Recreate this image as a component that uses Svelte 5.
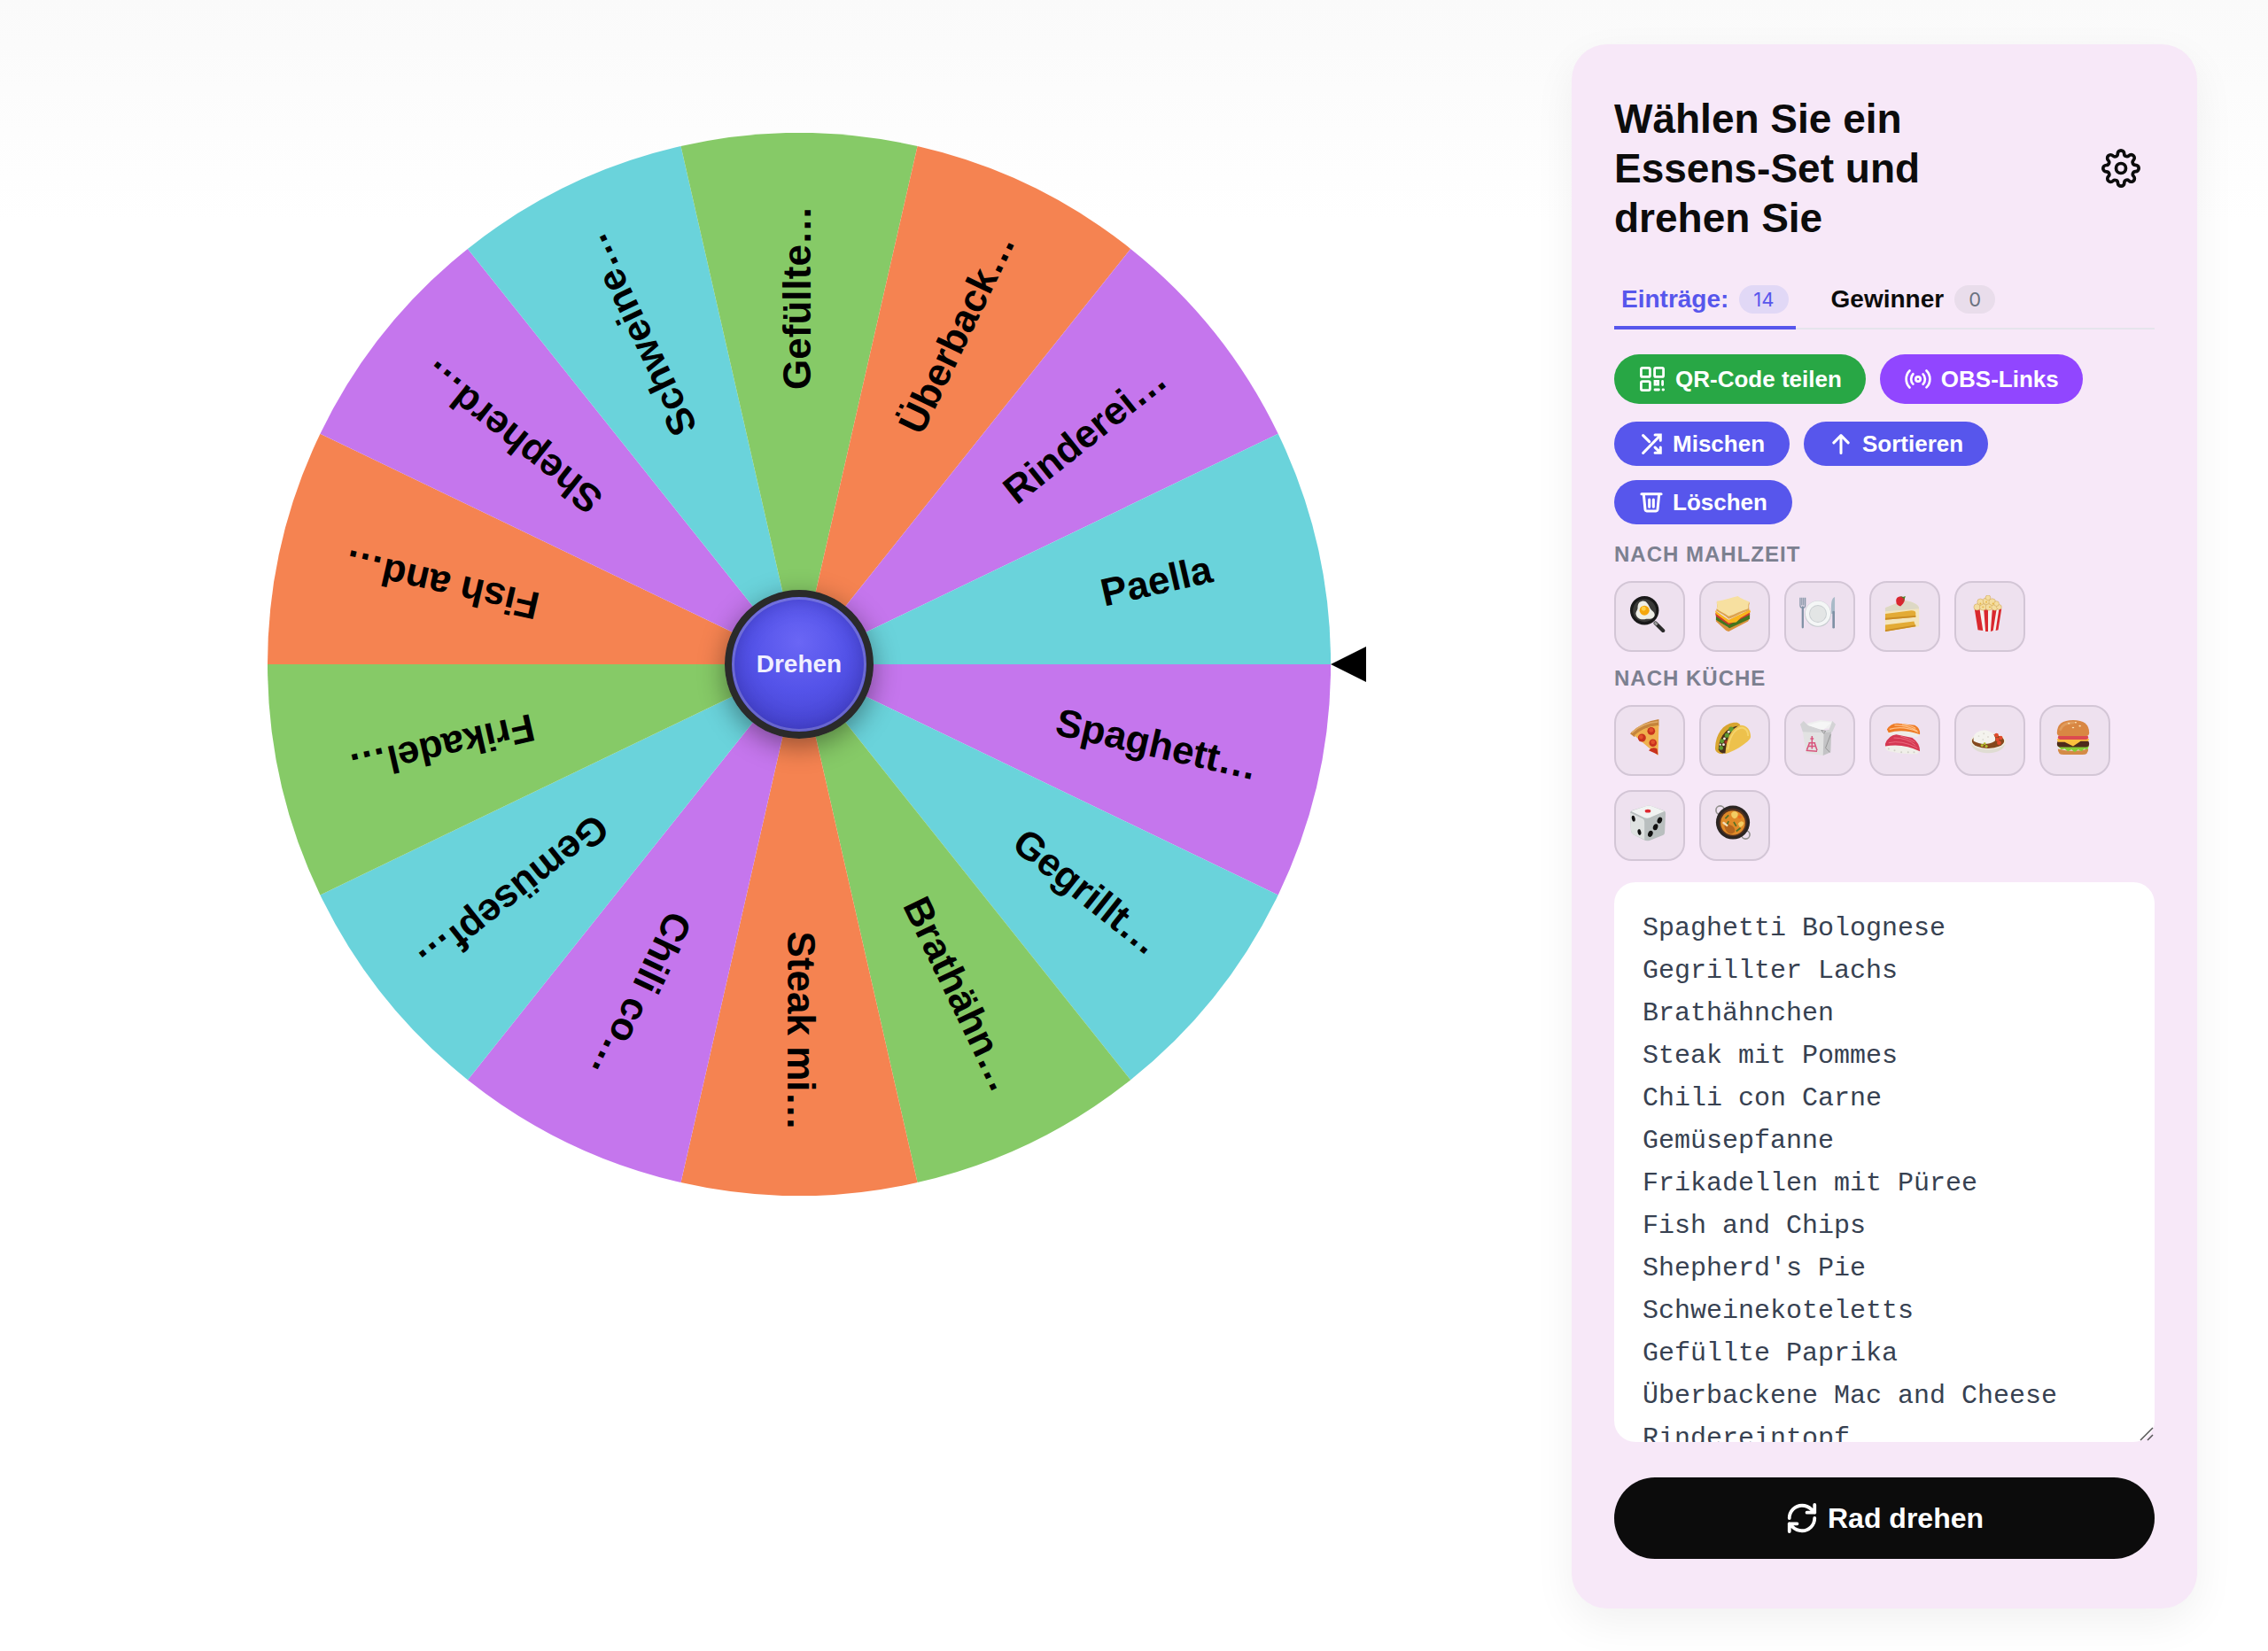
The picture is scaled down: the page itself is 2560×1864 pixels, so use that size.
<script>
  const entries = [
    'Spaghetti Bolognese',
    'Gegrillter Lachs',
    'Brathähnchen',
    'Steak mit Pommes',
    'Chili con Carne',
    'Gemüsepfanne',
    'Frikadellen mit Püree',
    'Fish and Chips',
    "Shepherd's Pie",
    'Schweinekoteletts',
    'Gefüllte Paprika',
    'Überbackene Mac and Cheese',
    'Rindereintopf',
    'Paella'
  ];

  let text = $state(entries.join('\n'));
  let tab = $state('entries');
  let rotation = $state(0);

  let items = $derived(text.split('\n').filter((line) => line.trim()));
  let step = $derived(360 / Math.max(items.length, 1));

  // purple, cyan, green, orange
  const wedgeColors = ['#c576ed', '#6ad3db', '#86ca67', '#f58351'];

  const meals = [
    {
      name: 'Frühstück',
      art: `<path d="M31 33l9 9" stroke="#2c2c2c" stroke-width="4.4" stroke-linecap="round"/><path d="M30 32l3 3" stroke="#999" stroke-width="3"/>
        <circle cx="18" cy="18" r="17" fill="#191919"/><circle cx="18" cy="18" r="13.6" fill="#3a3a38"/>
        <path d="M15 7c5-1 7 3 9 7 1 4 7 6 6 10-2 5-7 4-10 4-6 2-11-1-12-5-1-3 2-5 2-8 0-4 1-7 5-8z" fill="#eeeee6"/>
        <circle cx="18" cy="18" r="5.8" fill="#f5a70c"/><circle cx="17" cy="16" r="2.6" fill="#fdd045"/>`
    },
    {
      name: 'Mittagessen',
      art: `<path d="M2 28l14 10 26-11-2 4-23 12-3-1L2 31z" fill="#d9923c"/><path d="M2 24l15 10 25-12v6L18 39 2 29z" fill="#43751f"/>
        <path d="M1 21l16 10 25-12v4L17 35 2 25z" fill="#c9392e"/><path d="M1 18l16 11 25-12 1 3-12 7-5 5-9 1L2 22z" fill="#f9b51d"/>
        <path d="M3 8C11 7 21 3 28 2c2 3 11 5 14 7-2 4 0 7-1 9-8 2-17 8-24 10C12 23 6 21 2 18c2-3 1-7 1-10z" fill="#dca451"/>
        <path d="M3 7C11 6 20 3 28 1c3 3 10 5 14 7-3 3-1 5-2 8-8 2-16 7-23 9C12 21 6 19 3 16c1-3 0-5 0-9z" fill="#f7e0a0"/>`
    },
    {
      name: 'Abendessen',
      art: `<circle cx="22" cy="22" r="15.5" fill="#c4cace"/><circle cx="22" cy="21.5" r="14.8" fill="#f4f6f6"/><circle cx="22" cy="22" r="10.5" fill="#c9ced1"/><circle cx="22" cy="22" r="9.5" fill="#e3e5e5"/>
        <path d="M1 3v9q0 3 3 3M3 3v9M5 3v9M7 3v9q0 3-3 3" fill="none" stroke="#8292a4" stroke-width="1.3"/><path d="M4 14v24" stroke="#7f91a5" stroke-width="2.4" stroke-linecap="round"/>
        <path d="M42 2c-4 1-5 8-4 20h4z" fill="#a9bac8"/><path d="M40.5 20v18" stroke="#7f91a5" stroke-width="2.8" stroke-linecap="round"/>`
    },
    {
      name: 'Dessert',
      art: `<path d="M1 15L23 6c11 2 18 5 18 10v21L1 43z" fill="#f3e5bd"/><path d="M1 15L23 6c11 2 18 5 18 10L1 19z" fill="#ddd8c5"/>
        <path d="M1 22l31-4q5 0 5 3v5L1 29zM1 35l34-4 2 6-36 6z" fill="#e3ab35"/><path d="M1 27l36-3v2L1 29zM1 41l36-6v2L1 43z" fill="#c98b24"/>
        <path d="M14 8c-1-6 4-7 8-6 4 1 2 7-3 11-3-1-5-2-5-5z" fill="#da2630"/><path d="M18 1l5 3-2 4 3-4 1-3-3 1z" fill="#418429"/>`
    },
    {
      name: 'Snacks',
      art: `<path d="M6 16h32l-4 25q-12 3-24 0z" fill="#f5f0ed"/><path d="M6 16h6l4 26-6-1zM17 17h5v26h-3zM27 17h5l-4 25-3 1zM35 16h3l-4 25-3 1z" fill="#d9282e"/>
        <g fill="#f4dda0" stroke="#cb9d49" stroke-width=".5"><circle cx="9" cy="14" r="3.8"/><circle cx="16" cy="14" r="4"/><circle cx="23" cy="14" r="4"/><circle cx="30" cy="14" r="4"/><circle cx="35" cy="14" r="3"/><circle cx="13" cy="8" r="3.8"/><circle cx="20" cy="7" r="4"/><circle cx="27" cy="8" r="4"/><circle cx="32" cy="10" r="3"/><circle cx="22" cy="3" r="3"/></g>
        <g fill="#e5b33f"><circle cx="13" cy="10" r="1"/><circle cx="20" cy="8" r="1"/><circle cx="28" cy="10" r="1"/><circle cx="24" cy="14" r="1"/><circle cx="16" cy="14" r="1"/></g>`
    }
  ];

  const cuisines = [
    {
      name: 'Italienisch',
      art: `<path d="M1 17Q14 3 35 0v8Q18 8 6 21z" fill="#c5843b"/><path d="M6 19Q17 9 35 7l-1 36z" fill="#efb04d"/><path d="M3 16Q16 4 34 3" fill="none" stroke="#dfaa66" stroke-width="2"/>
        <g fill="#c8321d"><circle cx="26" cy="14" r="4.6"/><circle cx="15" cy="22" r="4.7"/><circle cx="28" cy="28" r="4.5"/><path d="M23 37q4-5 10-2l1 7z"/></g>
        <g fill="#e2512b"><circle cx="26" cy="13" r="2.5"/><circle cx="14" cy="21" r="2.5"/><circle cx="28" cy="27" r="2.5"/></g>`
    },
    {
      name: 'Mexikanisch',
      art: `<path d="M1 34C2 17 10 6 23 4c6-1 8 2 8 5L10 41c-6 0-9-3-9-7z" fill="#d8a52f"/><path d="M5 36C5 22 14 9 28 8L14 40c-4 1-7 0-9-4z" fill="#49301b"/>
        <g fill="#5f9a32"><circle cx="20" cy="12" r="3"/><circle cx="15" cy="19" r="2.7"/><circle cx="9" cy="26" r="2.6"/><circle cx="8" cy="34" r="2.5"/></g>
        <g fill="#f3eddc"><circle cx="17" cy="15" r="1.5"/><circle cx="12" cy="23" r="1.5"/><circle cx="11" cy="30" r="1.5"/><circle cx="7" cy="30" r="1.2"/></g><circle cx="14" cy="27" r="2" fill="#a03222"/>
        <path d="M13 41c1-18 7-31 18-34 8 0 12 6 12 14-1 6-21 18-30 20z" fill="#edc14c"/><path d="M16 36c2-15 8-25 17-26 5 1 7 5 7 10" fill="none" stroke="#f5d46d" stroke-width="2"/>`
    },
    {
      name: 'Chinesisch',
      art: `<path d="M9 5l16-4 15 2-5 8H12z" fill="#efefef"/><path d="M3 8l27 6-2 29-20-3z" fill="#e2e2e2"/><path d="M29 14l9-2-1 27-9 4z" fill="#c3c3c5"/>
        <path d="M1 6l4-4 5 5 18 6 1 3L4 15zM28 14l7-1 4-11 4 4-4 9-10 1z" fill="#d3d3d5"/><path d="M10 7l18 6 10-9-13-1z" fill="#f6f6f6"/><path d="M26 13l5 1-2 3zM37 18l-6 16 5 5" stroke="#888" fill="none" stroke-width=".8"/>
        <path d="M15 20v15M13 23h4M11 28h8M10 32h10M8 37l13 1M12 28l-3 8M18 28l3 9" stroke="#d8557d" stroke-width="1.6" fill="none"/>`
    },
    {
      name: 'Japanisch',
      art: `<path d="M5 14q-2 4 3 6l31 1q4-3 0-7z" fill="#eeede8"/><path d="M3 12Q8 4 16 5l20 2q7 4 6 11Q22 11 5 16z" fill="#ee7b24"/><path d="M6 12q15-5 34 3M12 7q15 0 27 7M21 6q12 2 16 5" fill="none" stroke="#ffc187" stroke-width="1.3"/>
        <path d="M1 30q-1 6 5 8 18 4 32 3 5-2 3-8z" fill="#f0efe9"/><path d="M1 29Q5 19 14 18l19 4q9 6 9 16Q22 28 1 32z" fill="#d53852"/><path d="M5 28q15-4 34 6M11 22q16 0 26 9M19 20q11 3 17 7" fill="none" stroke="#ea6c7f" stroke-width="1"/>
        <path d="M5 35h.1M12 37h.1M20 39h.1M28 39h.1M35 39h.1" stroke="#cfcfc6" stroke-width="2" stroke-linecap="round"/>`
    },
    {
      name: 'Indisch',
      art: `<path d="M1 26q2 14 21 14t21-14z" fill="#dfdcd2"/><ellipse cx="22" cy="26" rx="21" ry="10" fill="#efece2"/><ellipse cx="22" cy="26" rx="19" ry="8.5" fill="#84481d"/>
        <path d="M5 26C3 16 12 13 18 13s15 6 12 13c-8 5-18 4-25 0z" fill="#f4f3ee"/><g fill="#dbd9cf"><circle cx="11" cy="20" r="1"/><circle cx="17" cy="17" r="1"/><circle cx="22" cy="21" r="1"/><circle cx="16" cy="24" r="1"/></g>
        <g fill="#e24a2c"><circle cx="32" cy="19" r="2.5"/><circle cx="37" cy="22" r="2.3"/><circle cx="33" cy="24" r="2.2"/><circle cx="35" cy="28" r="2.5"/></g><g fill="#b2bd30"><circle cx="15" cy="31" r="1.7"/><circle cx="20" cy="32" r="1.7"/><circle cx="18" cy="29" r="1.5"/></g>`
    },
    {
      name: 'Amerikanisch',
      art: `<path d="M4 35q18 5 36 0 0 7-7 7H11q-7 0-7-7z" fill="#d48b46"/><path d="M3 31l38 0-2 5-4-1-3 3-4-2-4 3-4-3-4 2-4-3-4 1z" fill="#86cd36"/><rect x="3" y="25" width="38" height="8" rx="4" fill="#4d2b1b"/>
        <path d="M3 23h38l-1 3-9 0-9 6-10-5H4z" fill="#fbc13d"/><rect x="4" y="19" width="36" height="5" rx="2.5" fill="#dc4950"/><path d="M3 16q0-15 19-15t19 15q0 4-4 4H7q-4 0-4-4z" fill="#d98743"/><path d="M7 12Q10 4 22 4" fill="none" stroke="#e09b5c" stroke-width="3" stroke-linecap="round"/>
        <g fill="#fbe3b5"><ellipse cx="17" cy="5" rx="1.3" ry=".8"/><ellipse cx="25" cy="4" rx="1.3" ry=".8"/><ellipse cx="30" cy="8" rx="1.3" ry=".8"/><ellipse cx="22" cy="10" rx="1.3" ry=".8"/></g>`
    },
    {
      name: 'Zufällig',
      art: `<path d="M1 11q0-3 3-4L20 2q3-1 6 0l14 5q3 1 3 4l-1 22q0 3-3 4l-15 6q-4 1-7-1L5 36q-3-2-3-5z" fill="#b9bfbf"/><path d="M2 8L20 2q3-1 6 0l16 6-18 8q-3 1-6 0z" fill="#f1f3f2"/><path d="M1 10l15 7q2 1 2 4v21L5 36q-3-2-3-5z" fill="#dfe2e1"/>
        <ellipse cx="22" cy="8" rx="3.5" ry="2" fill="#de2930"/><g fill="#111"><ellipse cx="5" cy="17" rx="2" ry="3.6" transform="rotate(-12 5 17)"/><ellipse cx="12" cy="33" rx="2" ry="3.6" transform="rotate(-12 12 33)"/><ellipse cx="36" cy="19" rx="2.8" ry="3.8" transform="rotate(20 36 19)"/><ellipse cx="31" cy="27" rx="2.8" ry="3.8" transform="rotate(20 31 27)"/><ellipse cx="25" cy="35" rx="2.8" ry="3.8" transform="rotate(20 25 35)"/></g>`
    },
    {
      name: 'Eintopf',
      art: `<g fill="none" stroke="#92908e" stroke-width="1.7"><circle cx="7" cy="7" r="5"/><circle cx="37" cy="36" r="5"/></g><circle cx="22" cy="21.5" r="20" fill="#2b2522"/><circle cx="22" cy="21.5" r="16.5" fill="#54321f"/><circle cx="22" cy="22" r="14.5" fill="#e08a28"/>
        <path d="M12 27q0-7 6-3 8 3 6 9-8 6-12-6z" fill="#b5651d"/><path d="M20 11q4-5 8 0 0 5-4 6-4-1-4-6zM28 23q4-5 7-1-1 5-5 5z" fill="#f3cc62"/><path d="M13 17l4-4M26 32l5-4M23 21l3 5M17 20l-2 4" stroke="#547127" stroke-width="1.8"/><path d="M11 22l4 3" stroke="#f2dfb9" stroke-width="2.5" stroke-linecap="round"/><circle cx="30" cy="15" r="2" fill="#eb6d24"/>`
    }
  ];

  // point on the rim for an angle in degrees
  function rim(deg) {
    const rad = (deg * Math.PI) / 180;
    return `${600 * Math.cos(rad)} ${600 * Math.sin(rad)}`;
  }

  function wedge(i) {
    return `M0 0L${rim(i * step)}A600 600 0 0 1 ${rim((i + 1) * step)}Z`;
  }

  function label(item) {
    return item.length > 8 ? item.slice(0, 8) + '…' : item;
  }

  function spin() {
    rotation += 1440 + Math.random() * 360;
  }

  function shuffle() {
    text = [...items].sort(() => Math.random() - 0.5).join('\n');
  }

  function sort() {
    text = [...items].sort((a, b) => a.localeCompare(b, 'de')).join('\n');
  }
</script>

<main class="page">
  <section class="stage">
    <div class="wheel">
      <svg class="wheel-disc" viewBox="-600 -600 1200 1200" role="img" aria-label="Glücksrad">
        <g class="wheel-group" style:transform="rotate({rotation}deg)">
          {#each items as item, i (i)}
            <path d={wedge(i)} fill={wedgeColors[i % wedgeColors.length]} />
            <text class="wheel-label" x="414" y="13" transform="rotate({(i + 0.5) * step})">{label(item)}</text>
          {/each}
        </g>
      </svg>
      <svg class="pointer" viewBox="0 0 40 40" aria-hidden="true"><path d="M0 20L40 0v40z" /></svg>
      <button class="hub" onclick={spin}>Drehen</button>
    </div>
  </section>

  <aside class="card">
    <header class="card-header">
      <h1>Wählen Sie ein Essens-Set und drehen Sie</h1>
      <button class="settings" aria-label="Einstellungen">
        <svg viewBox="0 0 24 24" class="line">
          <circle cx="12" cy="12" r="3" />
          <path d="M19.4 15a1.65 1.65 0 0 0 .33 1.82l.06.06a2 2 0 0 1 0 2.83 2 2 0 0 1-2.83 0l-.06-.06a1.65 1.65 0 0 0-1.82-.33 1.65 1.65 0 0 0-1 1.51V21a2 2 0 0 1-2 2 2 2 0 0 1-2-2v-.09A1.65 1.65 0 0 0 9 19.4a1.65 1.65 0 0 0-1.82.33l-.06.06a2 2 0 0 1-2.83 0 2 2 0 0 1 0-2.83l.06-.06a1.65 1.65 0 0 0 .33-1.82 1.65 1.65 0 0 0-1.51-1H3a2 2 0 0 1-2-2 2 2 0 0 1 2-2h.09A1.65 1.65 0 0 0 4.6 9a1.65 1.65 0 0 0-.33-1.82l-.06-.06a2 2 0 0 1 0-2.83 2 2 0 0 1 2.83 0l.06.06a1.65 1.65 0 0 0 1.82.33H9a1.65 1.65 0 0 0 1-1.51V3a2 2 0 0 1 2-2 2 2 0 0 1 2 2v.09a1.65 1.65 0 0 0 1 1.51 1.65 1.65 0 0 0 1.82-.33l.06-.06a2 2 0 0 1 2.83 0 2 2 0 0 1 0 2.83l-.06.06a1.65 1.65 0 0 0-.33 1.82V9a1.65 1.65 0 0 0 1.51 1H21a2 2 0 0 1 2 2 2 2 0 0 1-2 2h-.09a1.65 1.65 0 0 0-1.51 1z" />
        </svg>
      </button>
    </header>

    <div class="tabs" role="tablist">
      <button class="tab" class:active={tab === 'entries'} role="tab" aria-selected={tab === 'entries'} onclick={() => (tab = 'entries')}>
        Einträge: <span class="count">{items.length}</span>
      </button>
      <button class="tab" class:active={tab === 'winners'} role="tab" aria-selected={tab === 'winners'} onclick={() => (tab = 'winners')}>
        Gewinner <span class="count">0</span>
      </button>
    </div>

    <div class="share">
      <button class="pill pill-lg green">
        <svg viewBox="0 0 32 32" class="line">
          <g stroke-width="2.8">
            <rect x="3.4" y="3.4" width="10" height="10" rx="1.5" />
            <rect x="18.6" y="3.4" width="10" height="10" rx="1.5" />
            <rect x="3.4" y="18.6" width="10" height="10" rx="1.5" />
            <path stroke-linejoin="miter" d="M19 18.4h3.6V22H19zM27.6 18.4v4.2M19 28h4.4M28 28h.6" />
          </g>
        </svg>
        QR-Code teilen
      </button>
      <button class="pill pill-lg violet">
        <svg viewBox="0 0 24 24" class="line">
          <path d="M4.9 19.1C1 15.2 1 8.8 4.9 4.9M7.8 16.2c-2.3-2.3-2.3-6.1 0-8.5M16.2 7.8c2.3 2.3 2.3 6.1 0 8.5M19.1 4.9C23 8.8 23 15.1 19.1 19" />
          <circle cx="12" cy="12" r="2" />
        </svg>
        OBS-Links
      </button>
    </div>

    <div class="actions">
      <button class="pill" onclick={shuffle}>
        <svg viewBox="0 0 24 24" class="line bold">
          <path stroke-linejoin="miter" d="M4 4l6 6M4 21L20 4.5M15.5 15.5l5 5M15.5 3.5h5.300v5.300M20.800 15.500v5.300h-5.300" />
        </svg>
        Mischen
      </button>
      <button class="pill" onclick={sort}>
        <svg viewBox="0 0 24 24" class="line bold"><path d="M12 21V4M5 11l7-7 7 7" /></svg>
        Sortieren
      </button>
      <button class="pill" onclick={() => (text = '')}>
        <svg viewBox="0 0 24 24" class="line bold">
          <path d="M2.5 4h19M4.5 4L6 19q.2 1.5 1.500 1.500h9q1.300 0 1.500-1.500L19.500 4M10 9.500v7M14 9.500v7" />
        </svg>
        Löschen
      </button>
    </div>

    <h2>Nach Mahlzeit</h2>
    <div class="chips">
      {#each meals as meal (meal.name)}
        <button class="chip" aria-label={meal.name}>
          <svg viewBox="0 0 44 44">{@html meal.art}</svg>
        </button>
      {/each}
    </div>

    <h2>Nach Küche</h2>
    <div class="chips">
      {#each cuisines as cuisine (cuisine.name)}
        <button class="chip" aria-label={cuisine.name}>
          <svg viewBox="0 0 44 44">{@html cuisine.art}</svg>
        </button>
      {/each}
    </div>

    <div class="editor">
      <textarea bind:value={text} rows="12" spellcheck="false" aria-label="Einträge"></textarea>
      <svg class="grip" viewBox="0 0 16 16" aria-hidden="true"><path d="M1 15L15 1M9 15l6-6" /></svg>
    </div>

    <button class="spin" onclick={spin}>
      <svg viewBox="0 0 24 24" class="line">
        <path d="M3 12a9 9 0 0 1 9-9 9.75 9.75 0 0 1 6.74 2.74L21 8M21 2.5V8h-5.5M21 12a9 9 0 0 1-9 9 9.75 9.75 0 0 1-6.74-2.74L3 16M8.5 16H3v5.5" />
      </svg>
      Rad drehen
    </button>
  </aside>
</main>

<style>
  :global(body) {
    background: #fff linear-gradient(#fafafa, #fff 250px) no-repeat;
    font-family: 'Liberation Sans', Arial, sans-serif;
  }

  button {
    border: none;
    background: none;
    padding: 0;
    font-family: inherit;
    cursor: pointer;
  }

  svg { display: block; flex-shrink: 0; }
  .line {
    fill: none;
    stroke: currentColor;
    stroke-width: 2;
    stroke-linecap: round;
    stroke-linejoin: round;
  }
  .line.bold { stroke-width: 2.6; }

  .page {
    display: grid;
    grid-template-columns: minmax(0, 1fr) 706px;
    gap: 50px;
    align-items: start;
    padding: 50px 80px 48px;
  }

  /* wheel */
  .stage {
    display: flex;
    justify-content: center;
    padding-top: 100px;
  }
  .wheel { position: relative; width: 73%; }
  .wheel-disc { width: 100%; }
  .wheel-group { transition: transform 4s cubic-bezier(0.15, 0.8, 0.2, 1); }
  .wheel-label {
    font-size: 44px;
    font-weight: 700;
    text-anchor: middle;
    fill: #000;
  }
  .pointer {
    position: absolute;
    top: 50%;
    left: 100%;
    width: 40px;
    transform: translateY(-50%);
  }
  .hub {
    position: absolute;
    top: 50%;
    left: 50%;
    transform: translate(-50%, -50%);
    width: 168px;
    height: 168px;
    border: 8px solid #2a2a2a;
    border-radius: 50%;
    background: radial-gradient(circle at 50% 35%, #6a66f5, #5453e9 40%, #403dc4 90%) border-box;
    box-shadow:
      0 8px 30px rgba(0, 0, 0, 0.4),
      inset 0 0 0 3px rgba(255, 255, 255, 0.22),
      inset 0 0 24px rgba(30, 25, 120, 0.4);
    color: #f0efff;
    font-size: 28px;
    font-weight: 700;
  }

  /* card */
  .card {
    box-sizing: border-box;
    padding: 56px 48px;
    border-radius: 40px;
    background: #f7e8f8;
    box-shadow: 0 16px 48px rgba(0, 0, 0, 0.06);
  }
  .card-header {
    display: flex;
    align-items: center;
    justify-content: space-between;
    gap: 32px;
  }
  h1 {
    margin: 0;
    color: #0c0c0c;
    font-size: 46px;
    line-height: 56px;
  }
  .settings { padding: 16px; color: #0c0c0c; }
  .settings svg { width: 44px; }

  .tabs {
    display: flex;
    gap: 32px;
    margin-top: 32px;
    box-shadow: inset 0 -2px #e5e4ec;
  }
  .tab {
    display: flex;
    align-items: center;
    gap: 12px;
    padding: 16px 8px 14px;
    border-bottom: 4px solid transparent;
    border-radius: 4px 4px 0 0;
    color: #0c0c0c;
    font-size: 28px;
    font-weight: 700;
    line-height: 32px;
  }
  .tab.active { border-color: #5756ec; color: #5756ec; }
  .count {
    padding: 0 16px;
    border-radius: 16px;
    background: #e9ddeb;
    color: #6b7280;
    font-family: Inter, sans-serif;
    font-size: 22px;
    font-weight: 400;
  }
  .tab.active .count { background: #e1d8f6; color: #5756ec; }

  .share, .actions, .chips {
    display: flex;
    flex-wrap: wrap;
    gap: 16px;
  }
  .share { margin: 28px 0 20px; }
  .actions { margin-bottom: 20px; }
  .pill {
    display: flex;
    align-items: center;
    gap: 10px;
    height: 50px;
    padding: 0 28px;
    border-radius: 28px;
    background: #5756ec;
    color: #fff;
    font-size: 26px;
    font-weight: 700;
  }
  .pill svg { width: 28px; }
  .pill-lg { height: 56px; padding: 0 27px; }
  .pill-lg svg { width: 32px; }
  .green { background: #28a745; }
  .violet { background: #9146ff; }

  h2 {
    margin: 16px 0;
    color: #7c8090;
    font-size: 24px;
    line-height: 28px;
    letter-spacing: 1px;
    text-transform: uppercase;
  }
  .chip {
    box-sizing: border-box;
    display: flex;
    align-items: flex-start;
    justify-content: center;
    width: 80px;
    height: 80px;
    padding: 14px 4px 0 0;
    border: 2px solid #d3c6d6;
    border-radius: 20px;
    background: #eee1ef;
  }
  .chip svg { width: 42px; }

  .editor { position: relative; margin-top: 24px; }
  textarea {
    box-sizing: border-box;
    display: block;
    width: 100%;
    height: 632px;
    padding: 28px 32px;
    border: none;
    border-radius: 24px;
    outline: none;
    resize: none;
    scrollbar-width: none;
    background: #fff;
    color: #374151;
    font: 30px/48px 'Liberation Mono', 'Courier New', monospace;
  }
  .grip {
    position: absolute;
    right: 1px;
    bottom: 1px;
    width: 16px;
    fill: none;
    stroke: #555;
    stroke-width: 1.5;
  }

  .spin {
    display: flex;
    align-items: center;
    justify-content: center;
    gap: 10px;
    width: 100%;
    height: 92px;
    margin-top: 40px;
    border-radius: 46px;
    background: #0c0c0c;
    color: #fff;
    font-size: 32px;
    font-weight: 700;
  }
  .spin svg { width: 38px; stroke-width: 2.4; }
</style>
